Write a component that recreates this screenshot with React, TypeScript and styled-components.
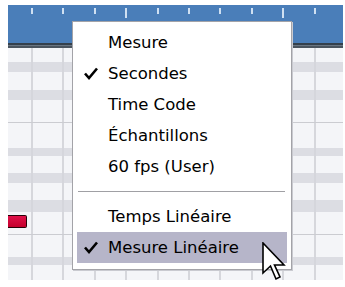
import styled, { createGlobalStyle } from 'styled-components';

const GlobalStyle = createGlobalStyle`
  html, body {
    margin: 0;
    padding: 0;
    background: #fff;
  }
  body {
    width: 345px;
    height: 287px;
    overflow: hidden;
    font-family: 'DejaVu Sans', Verdana, sans-serif;
  }
`;

const Screen = styled.div`
  position: relative;
  width: 345px;
  height: 287px;
  padding: 5px 2px 7px 8px;
  box-sizing: border-box;
`;

const Project = styled.div`
  display: flex;
  flex-direction: column;
  width: 335px;
`;

const Ruler = styled.div`
  height: 38px;
  background-color: #4a7eb9;
  background-image:
    repeating-linear-gradient(
      to right,
      transparent 0,
      transparent 23px,
      #cfe0f2 23px,
      #cfe0f2 25px,
      transparent 25px,
      transparent 31.4px
    );
  background-size: 100% 6px;
  background-position: 0 3px;
  background-repeat: no-repeat;
  display: flex;
`;

const MajorTick = styled.div<{ $x: number }>`
  width: 2px;
  height: 10px;
  margin-top: 3px;
  margin-left: ${(p) => p.$x}px;
  background: #cfe0f2;
`;

const RulerEdge = styled.div`
  height: 5px;
  background: linear-gradient(to bottom, #34404c 0, #34404c 2px, #6a7682 2px, #6a7682 3px, #4a545e 3px);
`;

const Track = styled.div<{ $h: number; $tone: 'light' | 'band'; $line?: boolean }>`
  height: ${(p) => p.$h}px;
  box-sizing: border-box;
  background-color: ${(p) => (p.$tone === 'band' ? '#dcdde3' : '#f4f5f8')};
  background-image: repeating-linear-gradient(
    to right,
    transparent 0,
    transparent 23px,
    ${(p) => (p.$tone === 'band' ? '#d5d6dc' : '#d6d7dc')} 23px,
    ${(p) => (p.$tone === 'band' ? '#d5d6dc' : '#d6d7dc')} 25px,
    transparent 25px,
    transparent 31.4px
  );
  border-bottom: ${(p) => (p.$line ? '1px solid #cbccd1' : 'none')};
`;

const EventPart = styled.div`
  width: 19px;
  height: 13px;
  margin-top: 3px;
  box-sizing: border-box;
  background: linear-gradient(to bottom, #e0104a, #c4002c);
  border: 1px solid #2a0008;
  border-left: none;
  border-radius: 0 2px 2px 0;
`;

const Menu = styled.div`
  position: absolute;
  left: 72px;
  top: 21px;
  width: 220px;
  box-sizing: border-box;
  padding: 5px 4px 6px;
  background: #fff;
  border: 1px solid #a3a3a8;
  box-shadow: 1px 1px 0 #c9cad0;
  display: flex;
  flex-direction: column;
`;

const Item = styled.div<{ $active?: boolean }>`
  height: 31px;
  display: flex;
  align-items: center;
  padding-left: 31px;
  position: relative;
  font-size: 16.5px;
  color: #000;
  background: ${(p) => (p.$active ? '#b6b5c9' : 'transparent')};
`;

const Check = styled.svg`
  position: absolute;
  left: 7px;
  top: 9px;
`;

const Separator = styled.div`
  height: 19px;
  display: flex;
  align-items: center;
  padding: 0 2px 0 1px;

  &::after {
    content: '';
    flex: 1;
    height: 1px;
    background: #a0a0a4;
  }
`;

const Pointer = styled.svg`
  position: absolute;
  left: 262px;
  top: 242px;
`;

const tracks: { h: number; tone: 'light' | 'band'; line?: boolean; event?: boolean }[] = [
  { h: 14, tone: 'light' },
  { h: 10, tone: 'band' },
  { h: 18, tone: 'light' },
  { h: 10, tone: 'band' },
  { h: 23, tone: 'light', line: true },
  { h: 25, tone: 'light' },
  { h: 8, tone: 'band' },
  { h: 17, tone: 'light' },
  { h: 10, tone: 'band' },
  { h: 17, tone: 'light' },
  { h: 12, tone: 'band' },
  { h: 23, tone: 'light', line: true, event: true },
  { h: 22, tone: 'light' },
  { h: 8, tone: 'band' },
  { h: 15, tone: 'light' },
];

const CheckMark = () => (
  <Check width="14" height="13" viewBox="0 0 14 13">
    <path d="M1 6.5 L5 11 L13 1.5" fill="none" stroke="#000" strokeWidth="2.6" strokeLinejoin="miter" />
  </Check>
);

const MenuEntry = ({ label, checked, active }: { label: string; checked?: boolean; active?: boolean }) => (
  <Item $active={active}>
    {checked && <CheckMark />}
    {label}
  </Item>
);

export default function App() {
  return (
    <>
      <GlobalStyle />
      <Screen>
        <Project>
          <Ruler>
            <MajorTick $x={117} />
            <MajorTick $x={155} />
          </Ruler>
          <RulerEdge />
          {tracks.map((t, i) => (
            <Track key={i} $h={t.h} $tone={t.tone} $line={t.line}>
              {t.event && <EventPart />}
            </Track>
          ))}
        </Project>

        <Menu>
          <MenuEntry label="Mesure" />
          <MenuEntry label="Secondes" checked />
          <MenuEntry label="Time Code" />
          <MenuEntry label="Échantillons" />
          <MenuEntry label="60 fps (User)" />
          <Separator />
          <MenuEntry label="Temps Linéaire" />
          <MenuEntry label="Mesure Linéaire" checked active />
        </Menu>

        <Pointer width="24" height="40" viewBox="0 0 24 40">
          <path
            d="M1 1 L1 31 L8.5 24 L14 37 L18 35 L12.5 23 L22 23 Z"
            fill="#fff"
            stroke="#000"
            strokeWidth="1.6"
            strokeLinejoin="miter"
          />
        </Pointer>
      </Screen>
    </>
  );
}
